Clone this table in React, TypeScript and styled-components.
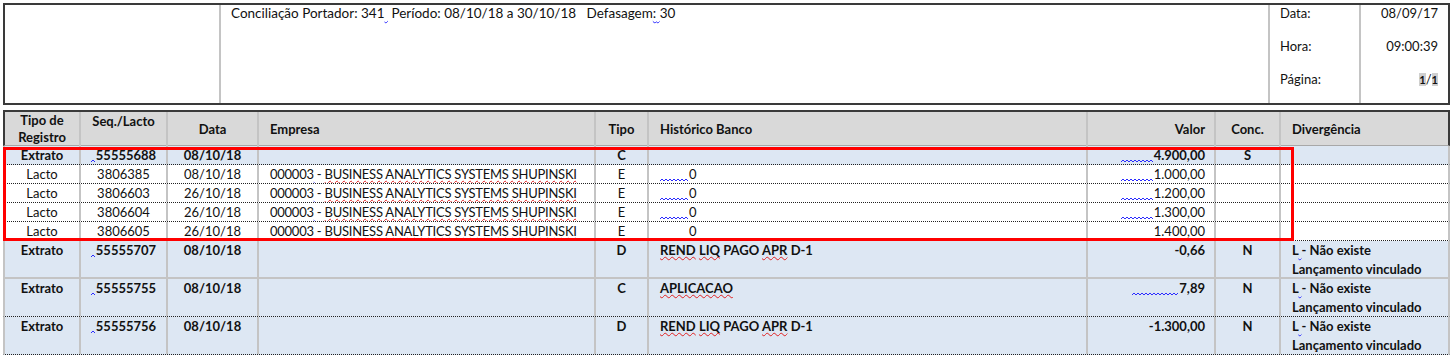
import React from "react";
import styled, { createGlobalStyle } from "styled-components";

const GlobalStyle = createGlobalStyle`
  html, body {
    margin: 0;
    padding: 0;
    background: #fff;
  }
  body {
    font-family: Lato, "Liberation Sans", sans-serif;
    color: #111;
  }
`;

const COLS = "76px 87px 91px 337px 53px 439px 128px 65px 167px";
const LINE = "#c4c4c4";
const DARK = "#3a3a3a";

type Align = "left" | "center" | "right";

const Page = styled.div`
  padding: 3px 0 0 3px;
  width: 1447px;
`;

const HeaderBox = styled.div`
  box-sizing: border-box;
  height: 102px;
  border: 2px solid ${DARK};
  display: grid;
  grid-template-columns: 214px 1049px 91px 1fr;
  font-size: 13px;
  line-height: 17px;
`;

const HeaderCell = styled.div<{ $first?: boolean }>`
  border-left: ${(p) => (p.$first ? "none" : `2px solid ${LINE}`)};
  display: flex;
  flex-direction: column;
  gap: 16px;
  padding: 0 10px;
`;

const TitleLine = styled.div`
  white-space: pre;
  font-size: 13.5px;
`;

const ValueLine = styled.div`
  text-align: right;
`;

const Field = styled.span`
  background: #cfcfcf;
  font-weight: 700;
  font-size: 11px;
`;

const Spell = styled.span<{ $color: string }>`
  text-decoration: underline wavy ${(p) => p.$color};
  text-decoration-thickness: 1px;
  text-underline-offset: 1px;
  text-decoration-skip-ink: none;
`;

const Table = styled.div`
  position: relative;
  margin-top: 5px;
  font-size: 13px;
`;

const HeadRow = styled.div`
  box-sizing: border-box;
  display: grid;
  grid-template-columns: ${COLS};
  height: 36px;
  background: #d9d9d9;
  border-top: 2px solid ${DARK};
  border-left: 2px solid ${DARK};
  border-right: 2px solid ${DARK};
  border-bottom: 1px solid #a8a8a8;
  font-weight: 700;
`;

const HeadCell = styled.div<{ $align: Align; $top?: boolean; $last?: boolean }>`
  display: flex;
  align-items: ${(p) => (p.$top ? "flex-start" : "center")};
  justify-content: ${(p) =>
    p.$align === "left" ? "flex-start" : p.$align === "right" ? "flex-end" : "center"};
  text-align: ${(p) => p.$align};
  padding: ${(p) => (p.$top ? "1px" : "0")} ${(p) => (p.$align === "right" ? "9px" : "0")} 0
    ${(p) => (p.$align === "left" ? "11px" : "0")};
  line-height: 17px;
  border-right: ${(p) => (p.$last ? "none" : `2px solid ${LINE}`)};
`;

const Row = styled.div<{ $tall?: boolean; $shade?: boolean; $bold?: boolean; $line: "dotted" | "solid" }>`
  box-sizing: border-box;
  display: grid;
  grid-template-columns: ${COLS};
  height: ${(p) => (p.$tall ? "38px" : "19px")};
  background: ${(p) => (p.$shade ? "#dde7f3" : "#fff")};
  font-weight: ${(p) => (p.$bold ? 700 : 400)};
  border-left: 2px solid ${LINE};
  border-right: 2px solid ${LINE};
  border-bottom: ${(p) => (p.$line === "dotted" ? "1px dotted #222" : `2px solid ${LINE}`)};
  line-height: ${(p) => (p.$tall ? "19px" : "18px")};
`;

const Cell = styled.div<{ $align: Align; $last?: boolean; $tight?: boolean }>`
  text-align: ${(p) => p.$align};
  padding: 0 ${(p) => (p.$align === "right" ? "9px" : "0")} 0
    ${(p) => (p.$align === "left" ? "11px" : "0")};
  border-right: ${(p) => (p.$last ? "none" : `2px solid ${LINE}`)};
  letter-spacing: ${(p) => (p.$tight ? "-0.25px" : "normal")};
  white-space: nowrap;
  overflow: hidden;
`;

const WaveSvg = styled.svg`
  display: inline-block;
  vertical-align: -4px;
  margin-right: 1px;
`;

const RedBox = styled.div`
  position: absolute;
  left: 0;
  top: 37px;
  width: 1291px;
  height: 94px;
  box-sizing: border-box;
  border: 3px solid #ff0000;
  pointer-events: none;
`;

function Wave({ w, color = "#2b2bff" }: { w: number; color?: string }) {
  const pts: string[] = [];
  for (let x = 0, i = 0; x <= w; x += 2, i++) pts.push(`${x},${i % 2 ? 1 : 3}`);
  return (
    <WaveSvg width={w} height={5} viewBox={`0 0 ${w} 5`}>
      <polyline points={pts.join(" ")} fill="none" stroke={color} strokeWidth={1} />
    </WaveSvg>
  );
}

const columns: { label: React.ReactNode; align: Align; top?: boolean }[] = [
  { label: <>Tipo de<br />Registro</>, align: "center" },
  { label: "Seq./Lacto", align: "center", top: true },
  { label: "Data", align: "center" },
  { label: "Empresa", align: "left" },
  { label: "Tipo", align: "center" },
  { label: "Histórico Banco", align: "left" },
  { label: "Valor", align: "right" },
  { label: "Conc.", align: "center" },
  { label: "Divergência", align: "left" },
];

const aligns: Align[] = columns.map((c) => c.align);

const empresa = (
  <>
    000003<Spell $color="#2b2bff">{"\u00a0"}</Spell>-{" "}
    <Spell $color="#e02020">BUSINESS ANALYTICS SYSTEMS SHUPINSKI</Spell>
  </>
);

const naoExiste = (
  <>
    L<Spell $color="#2b2bff">{"\u00a0"}</Spell>- Não existe
    <br />
    Lançamento vinculado
  </>
);

const rend = (
  <>
    <Spell $color="#e02020">REND</Spell> <Spell $color="#e02020">LIQ</Spell> PAGO{" "}
    <Spell $color="#e02020">APR</Spell> D-1
  </>
);

const lacto = (seq: string, data: string, valor: string, wave = true): React.ReactNode[] => [
  "Lacto",
  seq,
  data,
  empresa,
  "E",
  <>
    {wave ? <Wave w={28} /> : <span style={{ paddingLeft: 29 }} />}0
  </>,
  <>
    {wave && <Wave w={32} />}
    {valor}
  </>,
  "",
  "",
];

const seq = (n: string) => (
  <>
    <Wave w={4} />
    {n}
  </>
);

const rows: { cells: React.ReactNode[]; tall?: boolean; shade?: boolean; bold?: boolean; line: "dotted" | "solid" }[] = [
  {
    cells: ["Extrato", seq("55555688"), "08/10/18", "", "C", "", <><Wave w={32} />4.900,00</>, "S", ""],
    shade: true,
    bold: true,
    line: "dotted",
  },
  { cells: lacto("3806385", "08/10/18", "1.000,00"), line: "dotted" },
  { cells: lacto("3806603", "26/10/18", "1.200,00"), line: "dotted" },
  { cells: lacto("3806604", "26/10/18", "1.300,00"), line: "dotted" },
  { cells: lacto("3806605", "26/10/18", "1.400,00", false), line: "dotted" },
  {
    cells: ["Extrato", seq("55555707"), "08/10/18", "", "D", rend, "-0,66", "N", naoExiste],
    tall: true,
    shade: true,
    bold: true,
    line: "solid",
  },
  {
    cells: [
      "Extrato",
      seq("55555755"),
      "08/10/18",
      "",
      "C",
      <Spell $color="#e02020">APLICACAO</Spell>,
      <><Wave w={46} />7,89</>,
      "N",
      naoExiste,
    ],
    tall: true,
    shade: true,
    bold: true,
    line: "dotted",
  },
  {
    cells: ["Extrato", seq("55555756"), "08/10/18", "", "D", rend, "-1.300,00", "N", naoExiste],
    tall: true,
    shade: true,
    bold: true,
    line: "dotted",
  },
];

export default function App() {
  return (
    <Page>
      <GlobalStyle />
      <HeaderBox>
        <HeaderCell $first />
        <HeaderCell>
          <TitleLine>
            Conciliação Portador: 341<Spell $color="#2b2bff">{"\u00a0"}</Spell> Período: 08/10/18 a 30/10/18   Defasagem
            <Spell $color="#2b2bff">:{"\u00a0"}</Spell>30
          </TitleLine>
        </HeaderCell>
        <HeaderCell>
          <div>Data:</div>
          <div>Hora:</div>
          <div>Página:</div>
        </HeaderCell>
        <HeaderCell>
          <ValueLine>08/09/17</ValueLine>
          <ValueLine>09:00:39</ValueLine>
          <ValueLine>
            <Field>1</Field>/<Field>1</Field>
          </ValueLine>
        </HeaderCell>
      </HeaderBox>

      <Table>
        <HeadRow>
          {columns.map((c, i) => (
            <HeadCell key={i} $align={c.align} $top={c.top} $last={i === columns.length - 1}>
              <span>{c.label}</span>
            </HeadCell>
          ))}
        </HeadRow>
        {rows.map((r, ri) => (
          <Row key={ri} $tall={r.tall} $shade={r.shade} $bold={r.bold} $line={r.line}>
            {r.cells.map((c, ci) => (
              <Cell
                key={ci}
                $align={aligns[ci]}
                $last={ci === r.cells.length - 1}
                $tight={ci === 3}
              >
                {c}
              </Cell>
            ))}
          </Row>
        ))}
        <RedBox />
      </Table>
    </Page>
  );
}
